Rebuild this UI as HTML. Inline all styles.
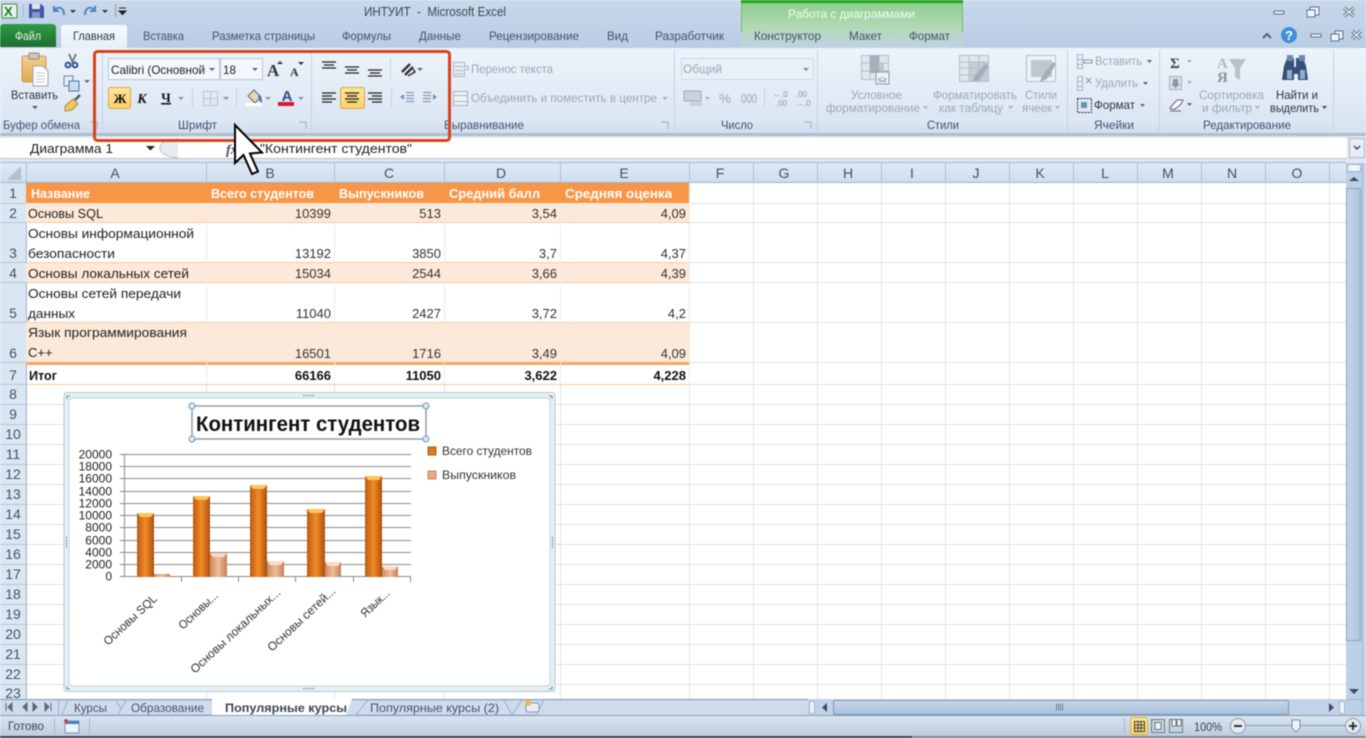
<!DOCTYPE html>
<html lang="ru"><head><meta charset="utf-8"><title>ИНТУИТ - Microsoft Excel</title>
<style>
html,body{margin:0;padding:0;width:1366px;height:738px;overflow:hidden;background:#fff}
svg{display:block;filter:blur(.4px)}
text{font-family:"Liberation Sans","Noto Sans CJK SC",sans-serif;white-space:pre}
.r{font-size:12px;fill:#44536a}
.k{font-size:12px;fill:#2c3440}
.d{font-size:12px;fill:#9aa8b8}
.c{font-size:13px;fill:#222}
.b{font-size:13px;fill:#111;font-weight:bold}
.w{font-size:13px;fill:#fff;font-weight:bold}
.h{font-size:14px;fill:#3f5268;text-anchor:middle}
.a{font-size:13px;fill:#333;text-anchor:end}
.x{font-size:12px;fill:#333}
</style></head><body>
<svg width="1366" height="738" viewBox="0 0 1366 738" xmlns="http://www.w3.org/2000/svg">
<defs>
<linearGradient id="top" x1="0" y1="0" x2="0" y2="1"><stop offset="0" stop-color="#c9d8ea"/><stop offset="1" stop-color="#b9cde4"/></linearGradient>
<linearGradient id="rib" x1="0" y1="0" x2="0" y2="1"><stop offset="0" stop-color="#edf3fa"/><stop offset=".7" stop-color="#dfe9f5"/><stop offset="1" stop-color="#d6e2f0"/></linearGradient>
<linearGradient id="grp" x1="0" y1="0" x2="0" y2="1"><stop offset="0" stop-color="#dfe9f5"/><stop offset="1" stop-color="#d0deee"/></linearGradient>
<linearGradient id="file" x1="0" y1="0" x2="0" y2="1"><stop offset="0" stop-color="#2f9b45"/><stop offset="1" stop-color="#1f6e30"/></linearGradient>
<linearGradient id="home" x1="0" y1="0" x2="0" y2="1"><stop offset="0" stop-color="#f6fafe"/><stop offset="1" stop-color="#e6eef8"/></linearGradient>
<linearGradient id="grn" x1="0" y1="0" x2="0" y2="1"><stop offset="0" stop-color="#89cd8a"/><stop offset=".55" stop-color="#b2d9b4"/><stop offset="1" stop-color="#bfd2e6"/></linearGradient>
<linearGradient id="yel" x1="0" y1="0" x2="0" y2="1"><stop offset="0" stop-color="#fde49a"/><stop offset="1" stop-color="#fbd268"/></linearGradient>
<linearGradient id="hdr" x1="0" y1="0" x2="0" y2="1"><stop offset="0" stop-color="#dfe9f5"/><stop offset="1" stop-color="#cfddee"/></linearGradient>
<linearGradient id="bar" x1="0" y1="0" x2="1" y2="0"><stop offset="0" stop-color="#b85c12"/><stop offset=".5" stop-color="#f48b28"/><stop offset="1" stop-color="#a9500e"/></linearGradient>
<linearGradient id="bar2" x1="0" y1="0" x2="1" y2="0"><stop offset="0" stop-color="#c98a64"/><stop offset=".5" stop-color="#f4bd98"/><stop offset="1" stop-color="#c27f58"/></linearGradient>
<linearGradient id="sb" x1="0" y1="0" x2="0" y2="1"><stop offset="0" stop-color="#c9d9ea"/><stop offset=".5" stop-color="#b6cbe2"/><stop offset="1" stop-color="#a8c0da"/></linearGradient>
<linearGradient id="sv" x1="0" y1="0" x2="1" y2="0"><stop offset="0" stop-color="#c3d4e8"/><stop offset="1" stop-color="#afc6df"/></linearGradient>
<linearGradient id="st" x1="0" y1="0" x2="0" y2="1"><stop offset="0" stop-color="#dae5f2"/><stop offset="1" stop-color="#bccde0"/></linearGradient>
<linearGradient id="clip" x1="0" y1="0" x2="0" y2="1"><stop offset="0" stop-color="#f3cf8a"/><stop offset="1" stop-color="#e0a850"/></linearGradient>
</defs>

<!-- top -->
<rect width="1366" height="48" fill="url(#top)"/>
<rect x="741" y="0" width="222" height="48" fill="url(#grn)"/>
<rect x="741" y="0" width="222" height="3" fill="#1ea51f"/>
<path d="M741.5 3V32M962.5 3V32" stroke="#6cbb6e" stroke-width="1"/>
<text x="364" y="16" font-size="13" fill="#3a4656" textLength="142" lengthAdjust="spacingAndGlyphs">ИНТУИТ  -  Microsoft Excel</text>
<text x="788" y="18" font-size="12" fill="#f4fbf4" textLength="127" lengthAdjust="spacingAndGlyphs">Работа с диаграммами</text>

<!-- QAT -->
<rect x="2" y="4" width="15" height="14" rx="1" fill="#e8f2e6" stroke="#3d8a48"/>
<text x="4" y="16" font-size="13" font-weight="bold" fill="#1b7a2c">X</text>
<path d="M23.5 4V17" stroke="#9fb2c8"/>
<path d="M29 4h12l3 3v11H29z" fill="#3f55a8"/><rect x="32" y="4" width="8" height="5" fill="#dfe6f4"/><rect x="32" y="12" width="8" height="6" fill="#8794c8"/>
<path d="M54 6v5h5M55 10c3-4 9-3 9 5" fill="none" stroke="#4a80c8" stroke-width="2"/>
<path d="M70 10h6l-3 3z" fill="#333"/>
<path d="M95 6v5h-5M94 10c-3-4-9-3-9 5" fill="none" stroke="#4a80c8" stroke-width="2"/>
<path d="M102 10h6l-3 3z" fill="#333"/>
<path d="M115.500 4V17" stroke="#8a9cb2"/>
<path d="M119 8h7M119 11h7l-3.500 3.500z" stroke="#222" fill="#222" stroke-width="1"/>

<!-- tabs -->
<path d="M0 47V28q0-4 4-4h48q4 0 4 4v19z" fill="url(#file)"/>
<path d="M61 48V28q0-3 3-3h60q3 0 3 3v20z" fill="url(#home)"/>
<text x="15" y="40" font-size="12" fill="#e8f5e8" textLength="26" lengthAdjust="spacingAndGlyphs">Файл</text>
<g class="tabs">
<text x="73" y="40" class="k" textLength="42" lengthAdjust="spacingAndGlyphs">Главная</text>
<text x="143" y="40" class="r" textLength="41" lengthAdjust="spacingAndGlyphs">Вставка</text>
<text x="212" y="40" class="r" textLength="103" lengthAdjust="spacingAndGlyphs">Разметка страницы</text>
<text x="342" y="40" class="r" textLength="49" lengthAdjust="spacingAndGlyphs">Формулы</text>
<text x="419" y="40" class="r" textLength="42" lengthAdjust="spacingAndGlyphs">Данные</text>
<text x="489" y="40" class="r" textLength="90" lengthAdjust="spacingAndGlyphs">Рецензирование</text>
<text x="607" y="40" class="r" textLength="21" lengthAdjust="spacingAndGlyphs">Вид</text>
<text x="655" y="40" class="r" textLength="69" lengthAdjust="spacingAndGlyphs">Разработчик</text>
<text x="754" y="40" class="r" textLength="67" lengthAdjust="spacingAndGlyphs">Конструктор</text>
<text x="849" y="40" class="r" textLength="33" lengthAdjust="spacingAndGlyphs">Макет</text>
<text x="909" y="40" class="r" textLength="41" lengthAdjust="spacingAndGlyphs">Формат</text>
</g>

<!-- window buttons -->
<g fill="#eef3fa" stroke="#5f7088" stroke-width="1">
<rect x="1274" y="11" width="10" height="3"/>
<rect x="1310" y="7" width="9" height="8"/><rect x="1307" y="10" width="8" height="7"/>
<rect x="1311" y="34" width="10" height="3"/>
<rect x="1335" y="31" width="8" height="8"/><rect x="1331" y="34" width="8" height="7"/>
</g>
<path d="M1344 8l10 8M1354 8l-10 8M1352 31l9 8M1361 31l-9 8" stroke="#5f7088" stroke-width="3.400" fill="none"/>
<path d="M1344 8l10 8M1354 8l-10 8M1352 31l9 8M1361 31l-9 8" stroke="#eef3fa" stroke-width="1.400" fill="none"/>
<path d="M1263 38l4-4 4 4" fill="none" stroke="#44546a" stroke-width="1.800"/>
<circle cx="1289" cy="35" r="8" fill="#3f8fd8"/>
<text x="1289" y="40" font-size="13" font-weight="bold" fill="#fff" text-anchor="middle">?</text>

<!-- ribbon -->
<rect y="48" width="1366" height="85" fill="url(#rib)"/>
<rect y="118" width="1333" height="15" fill="url(#grp)"/>
<rect y="133" width="1366" height="3" fill="#b0bdcc"/>
<path d="M102.500 50V132M311.500 52V132M674.500 50V132M817.500 50V132M1067.500 50V132M1159.500 50V132M1333.500 50V132" stroke="#c6d3e2"/>

<text x="3" y="129" class="r" textLength="77" lengthAdjust="spacingAndGlyphs">Буфер обмена</text>
<text x="178" y="129" class="r" textLength="39" lengthAdjust="spacingAndGlyphs">Шрифт</text>
<text x="444" y="129" class="r" textLength="80" lengthAdjust="spacingAndGlyphs">Выравнивание</text>
<text x="721" y="129" class="r" textLength="32" lengthAdjust="spacingAndGlyphs">Число</text>
<text x="927" y="129" class="r" textLength="32" lengthAdjust="spacingAndGlyphs">Стили</text>
<text x="1094" y="129" class="r" textLength="40" lengthAdjust="spacingAndGlyphs">Ячейки</text>
<text x="1203" y="129" class="r" textLength="88" lengthAdjust="spacingAndGlyphs">Редактирование</text>
<path d="M90 122h7v7M299 122h7v7M661 122h7v7M804 122h7v7" fill="none" stroke="#b4c0ce" stroke-width="1.500"/>

<!-- clipboard -->
<rect x="22" y="56" width="24" height="26" rx="2" fill="url(#clip)" stroke="#c79a58"/>
<rect x="29" y="53" width="10" height="6" rx="1" fill="#c9c9c0" stroke="#8d8d80"/>
<path d="M33 66h10l5 5v15H33z" fill="#fbfcfe" stroke="#a0a8b4"/>
<path d="M36 73h9M36 76h9M36 79h9M36 82h9" stroke="#c8ced8"/>
<text x="11" y="99" class="k" textLength="47" lengthAdjust="spacingAndGlyphs">Вставить</text>
<path d="M32 106h6l-3 3z" fill="#556"/>
<path d="M69 54l4 9M76 54l-4 9" stroke="#66728a" stroke-width="1.800"/><circle cx="68" cy="65" r="2.400" fill="none" stroke="#30509c" stroke-width="2"/><circle cx="75" cy="65" r="2.400" fill="none" stroke="#30509c" stroke-width="2"/>
<rect x="64" y="76" width="9" height="10" fill="#e4ecf6" stroke="#6c88ac"/><rect x="69" y="81" width="10" height="10" fill="#c9dcf2" stroke="#4e78ac"/>
<path d="M84 80h6l-3 3z" fill="#667"/>
<path d="M65 106l8-7 5 5-6 6-7 1z" fill="#eec95a" stroke="#a88a40"/><path d="M75 100l5-5" stroke="#556" stroke-width="2.500"/>

<!-- font group -->
<rect x="108.500" y="58.500" width="111" height="21" fill="#f4f8fc" stroke="#b8c6d6"/>
<rect x="220.500" y="58.500" width="42" height="21" fill="#f4f8fc" stroke="#b8c6d6"/>
<text x="111" y="74" font-size="12" fill="#222" textLength="94" lengthAdjust="spacingAndGlyphs">Calibri (Основной</text>
<text x="223" y="74" font-size="12" fill="#222" textLength="13" lengthAdjust="spacingAndGlyphs">18</text>
<path d="M209 68h6l-3 3zM252 68h6l-3 3z" fill="#667"/>
<text x="267" y="76" font-size="17" font-weight="bold" fill="#333" style="font-family:'Liberation Serif',serif">A</text>
<text x="290" y="76" font-size="12" font-weight="bold" fill="#333" style="font-family:'Liberation Serif',serif">A</text>
<path d="M277 64l3-3 3 3zM298 62l3 3 3-3z" fill="#333"/>
<rect x="108.500" y="87.500" width="22" height="21" rx="2" fill="url(#yel)" stroke="#d4a850"/>
<text x="120" y="103" font-size="13" font-weight="bold" fill="#111" text-anchor="middle" style="font-family:'Liberation Serif',serif">Ж</text>
<text x="142" y="103" font-size="14" font-weight="bold" font-style="italic" fill="#111" text-anchor="middle" style="font-family:'Liberation Serif',serif">К</text>
<text x="166" y="102" font-size="13" font-weight="bold" fill="#111" text-anchor="middle" style="font-family:'Liberation Serif',serif">Ч</text>
<rect x="161" y="103" width="10" height="1.500" fill="#111"/>
<path d="M178 97h6l-3 3zM223 97h6l-3 3zM265 97h6l-3 3zM298 97h6l-3 3z" fill="#8a96a6"/>
<path d="M192.500 88V108M236.500 88V108" stroke="#c6d3e2"/>
<path d="M203.500 91.500h14v14h-14zM210.500 91.500v14M203.500 98.500h14" fill="none" stroke="#bcc6d2"/>
<path d="M248 96l6-6 7 7-6 6z" fill="#e8d6b0" stroke="#667"/><path d="M258 95q5 3 4 8-4-2-4-8z" fill="#3f78c4"/>
<rect x="245" y="103" width="17" height="3" fill="#fff"/>
<text x="287" y="101" font-size="15" font-weight="bold" fill="#2f4a80" text-anchor="middle">A</text>
<rect x="278" y="102" width="16" height="4" fill="#d8182c"/>

<!-- align -->
<path d="M322 62h14M324 65h10M322 68h14M345 67h14M347 70h10M345 73h14M368 70h14M370 73h10M368 76h14" stroke="#222" stroke-width="1.300" fill="none"/>
<path d="M390.500 58V80" stroke="#c6d3e2"/>
<path d="M402 72l8-8M405 75l8-8" stroke="#333" stroke-width="2.400"/><path d="M408 76l7-4-2-3" fill="none" stroke="#333" stroke-width="1.500"/>
<path d="M417 68h6l-3 3z" fill="#667"/>
<rect x="340.500" y="87.500" width="24" height="21" rx="2" fill="url(#yel)" stroke="#d4a850"/>
<path d="M322 93h14M322 96h10M322 99h14M322 102h10M345 93h14M347 96h10M345 99h14M347 102h10M368 93h14M372 96h10M368 99h14M372 102h10" stroke="#222" stroke-width="1.300" fill="none"/>
<path d="M391.500 88V108" stroke="#c6d3e2"/>
<path d="M406 92.500h8M406 95.500h8M406 98.500h8M406 101.500h8M423 92.500h8M423 95.500h8M423 98.500h8M423 101.500h8" stroke="#7a8a9c" fill="none"/>
<path d="M404 94l-4 3 4 3zM433 94l4 3-4 3z" fill="#6a94c4"/>

<!-- wrap/merge -->
<path d="M453.500 62.500h11v14h-11zM455 66.500h8M455 70.500h8M455 74h8" fill="none" stroke="#a8b2be"/>
<path d="M465 66h3v4h-2" fill="none" stroke="#a8b2be"/>
<text x="471" y="73" class="d" textLength="82" lengthAdjust="spacingAndGlyphs">Перенос текста</text>
<path d="M453.500 91.500h14v14h-14zM453.500 95.500h14M453.500 101.500h14" fill="#eef2f6" stroke="#a8b2be"/>
<text x="471" y="102" class="d" textLength="186" lengthAdjust="spacingAndGlyphs">Объединить и поместить в центре</text>
<path d="M662 97h6l-3 3z" fill="#a8b2be"/>

<!-- number -->
<rect x="681.500" y="58.500" width="132" height="21" fill="#e8f0f8" stroke="#ccd8e6"/>
<text x="683" y="73" class="d" textLength="39" lengthAdjust="spacingAndGlyphs">Общий</text>
<path d="M803 68h6l-3 3z" fill="#7a8898"/>
<rect x="684" y="91" width="17" height="10" fill="#c8d2dc" stroke="#a0acba"/><path d="M690 102h12v4h-12z" fill="#c8d2dc"/>
<path d="M705 97h5l-2.500 3z" fill="#a8b2be"/>
<text x="719" y="103" class="d" textLength="12" lengthAdjust="spacingAndGlyphs" style="font-size:13px">%</text>
<text x="741" y="103" class="d" textLength="16" lengthAdjust="spacingAndGlyphs" style="font-size:13px">000</text>
<path d="M764.500 88V108" stroke="#c6d3e2"/>
<text x="773" y="97" font-size="8" fill="#8a98a8">←,0</text><text x="776" y="106" font-size="8" fill="#8a98a8">,00</text>
<text x="796" y="97" font-size="8" fill="#8a98a8">,00</text><text x="796" y="106" font-size="8" fill="#8a98a8">→,0</text>

<!-- styles -->
<g fill="none" stroke="#b4bec9">
<rect x="861.500" y="55.500" width="27" height="24" fill="#dfe6ee"/>
<path d="M861 63h28M861 71h28M870 55v24M879 55v24"/>
</g>
<rect x="870" y="55" width="9" height="18" fill="#a5afbb"/>
<rect x="879" y="63" width="5" height="10" fill="#bcc5cf"/>
<rect x="876" y="72" width="13" height="12" fill="#eef2f6" stroke="#8d98a6"/>
<text x="878" y="82" font-size="8" fill="#6d7886">≤≥</text>

<g fill="none" stroke="#b4bec9">
<rect x="959.500" y="55.500" width="29" height="26" fill="#dfe6ee"/>
<path d="M959 62h30M959 68h30M959 75h30M969 55v27M979 55v27"/>
</g>
<rect x="969" y="62" width="20" height="20" fill="#b6bfca" opacity=".7"/>
<path d="M989 66l-10 14-6 2 1-5 11-13z" fill="#a4aeb9"/>
<rect x="1026.500" y="55.500" width="29" height="26" fill="#eef2f6" stroke="#b4bec9"/>
<rect x="1031" y="60" width="21" height="17" fill="#bfc8d2"/>
<path d="M1056 64l-9 15-7 3 2-6 11-14z" fill="#a4aeb9"/>
<text x="851" y="99" class="d" textLength="51" lengthAdjust="spacingAndGlyphs">Условное</text>
<text x="826" y="112" class="d" textLength="94" lengthAdjust="spacingAndGlyphs">форматирование</text>
<text x="933" y="99" class="d" textLength="84" lengthAdjust="spacingAndGlyphs">Форматировать</text>
<text x="939" y="112" class="d" textLength="64" lengthAdjust="spacingAndGlyphs">как таблицу</text>
<text x="1025" y="99" class="d" textLength="32" lengthAdjust="spacingAndGlyphs">Стили</text>
<text x="1022" y="112" class="d" textLength="30" lengthAdjust="spacingAndGlyphs">ячеек</text>
<path d="M923 106h5l-2.500 3zM1008 106h5l-2.500 3zM1055 106h5l-2.500 3z" fill="#a8b2be"/>

<!-- cells -->
<path d="M1077.500 54.500h5v14h-5zM1077.500 59.500h5M1077.500 64.500h5M1077.500 76.500h5v14h-5zM1077.500 81.500h5M1077.500 86.500h5" fill="none" stroke="#a8b2be"/>
<path d="M1084 60h8v3h-8zM1086 78l5 5M1091 78l-5 5" fill="none" stroke="#8a96a6"/>
<text x="1095" y="65" class="d" textLength="47" lengthAdjust="spacingAndGlyphs">Вставить</text>
<text x="1095" y="87" class="d" textLength="43" lengthAdjust="spacingAndGlyphs">Удалить</text>
<rect x="1077.500" y="98.500" width="14" height="14" fill="#dfe8f2" stroke="#333" stroke-dasharray="2 1"/>
<rect x="1081" y="102" width="6" height="6" fill="#6d8fb8"/>
<text x="1094" y="109" class="k" textLength="41" lengthAdjust="spacingAndGlyphs">Формат</text>
<path d="M1147 60h5l-2.500 3zM1143 82h5l-2.500 3zM1140 104h5l-2.500 3z" fill="#667"/>

<!-- edit -->
<text x="1170" y="68" font-size="15" font-weight="bold" fill="#445" style="font-family:'Liberation Serif',serif">Σ</text>
<path d="M1187 60h5l-2.500 3z" fill="#a8b2be"/>
<rect x="1169.500" y="76.500" width="12" height="13" fill="#d8e0e8" stroke="#a8b2be"/><path d="M1173 79h5v5h2l-4.500 4-4.500-4h2z" fill="#8a96a6"/>
<path d="M1187 81h5l-2.500 3z" fill="#a8b2be"/>
<path d="M1170 108l7-8h6l-2 4-6 5h-4z" fill="#fbfcfe" stroke="#667"/><path d="M1170 111h11" stroke="#667"/>
<path d="M1187 103h5l-2.500 3z" fill="#667"/>
<text x="1217" y="68" font-size="15" font-weight="bold" fill="#b0b8c2" style="font-family:'Liberation Serif',serif">А</text>
<text x="1217" y="82" font-size="15" font-weight="bold" fill="#8a94a0" style="font-family:'Liberation Serif',serif">Я</text>
<path d="M1229 59h17l-6 9v12l-5-3v-9z" fill="#b8c0ca"/>
<text x="1199" y="99" class="d" textLength="65" lengthAdjust="spacingAndGlyphs">Сортировка</text>
<text x="1202" y="112" class="d" textLength="50" lengthAdjust="spacingAndGlyphs">и фильтр</text>
<path d="M1255 106h5l-2.500 3z" fill="#a8b2be"/>
<path d="M1284 66l3-8h7v9h2v-9h7l3 8 2 14h-10v-6h-4v6h-12z" fill="#34507a"/>
<rect x="1287" y="55" width="6" height="6" fill="#6d8aae"/><rect x="1299" y="55" width="6" height="6" fill="#6d8aae"/>
<path d="M1287 70h5v9h-5zM1300 70h5v9h-5z" fill="#95abc8"/>
<text x="1276" y="99" class="k" textLength="42" lengthAdjust="spacingAndGlyphs">Найти и</text>
<text x="1270" y="112" class="k" textLength="49" lengthAdjust="spacingAndGlyphs">выделить</text>
<path d="M1322 106h5l-2.500 3z" fill="#445"/>

<!-- formula bar -->
<rect y="136" width="1366" height="27" fill="#dfe8f2"/>
<rect y="138" width="1347" height="20" fill="#fff"/>
<path d="M0 158.500H1347" stroke="#b4c2d2"/>
<rect x="1349.500" y="138.500" width="15" height="19" fill="#e6edf6" stroke="#a8b8ca"/>
<path d="M1354 146l3 3 3-3" fill="none" stroke="#445" stroke-width="1.500"/>
<text x="30" y="153" font-size="13" fill="#222" textLength="83" lengthAdjust="spacingAndGlyphs">Диаграмма 1</text>
<path d="M146 146h9l-4.500 4.500z" fill="#222"/>
<path d="M178 139q-18 1-18 9t18 10h-0" fill="#e8ecf1" stroke="#b6c0cc"/>
<text x="226" y="154" font-size="14" font-style="italic" font-weight="bold" fill="#44536a" style="font-family:'Liberation Serif',serif">fx</text>
<text x="260" y="153" font-size="13" fill="#222" textLength="152" lengthAdjust="spacingAndGlyphs">"Контингент студентов"</text>

<!-- grid -->
<rect x="0" y="183" width="1346" height="516" fill="#fff"/>
<path d="M206.500 183V699M334.500 183V699M444.500 183V699M560.500 183V699M689.500 183V699M753.500 183V699M817.500 183V699M881.500 183V699M945.500 183V699M1009.500 183V699M1073.500 183V699M1137.500 183V699M1201.500 183V699M1265.500 183V699M1329.500 183V699" stroke="#dfe3e7"/>
<path d="M26 203.500H1346M26 222.500H1346M26 262.500H1346M26 282.500H1346M26 322.500H1346M26 362.500H1346M26 384.500H1346M26 404.500H1346M26 424.500H1346M26 444.500H1346M26 464.500H1346M26 484.500H1346M26 504.500H1346M26 524.500H1346M26 544.500H1346M26 564.500H1346M26 584.500H1346M26 604.500H1346M26 624.500H1346M26 644.500H1346M26 664.500H1346M26 684.500H1346" stroke="#dfe3e7"/>

<!-- headers -->
<rect x="0" y="163" width="1346" height="20" fill="url(#hdr)"/>
<path d="M0 162.500H1346" stroke="#9fb3c8"/>
<rect x="0" y="183" width="26" height="516" fill="#dbe6f3"/>
<path d="M26.500 183V699M0 182.500H1346" stroke="#9fb3c8"/>
<path d="M26.500 163V183M206.500 163V183M334.500 163V183M444.500 163V183M560.500 163V183M689.500 163V183M753.500 163V183M817.500 163V183M881.500 163V183M945.500 163V183M1009.500 163V183M1073.500 163V183M1137.500 163V183M1201.500 163V183M1265.500 163V183M1329.500 163V183" stroke="#aebfd2"/>
<path d="M0 203.500H26M0 222.500H26M0 262.500H26M0 282.500H26M0 322.500H26M0 362.500H26M0 384.500H26M0 404.500H26M0 424.500H26M0 444.500H26M0 464.500H26M0 484.500H26M0 504.500H26M0 524.500H26M0 544.500H26M0 564.500H26M0 584.500H26M0 604.500H26M0 624.500H26M0 644.500H26M0 664.500H26M0 684.500H26" stroke="#b6c6d8"/>
<path d="M21 166v14H7z" fill="#b0bfd0"/>
<text x="115" y="178" class="h">A</text><text x="270" y="178" class="h">B</text><text x="389" y="178" class="h">C</text><text x="501" y="178" class="h">D</text><text x="624" y="178" class="h">E</text><text x="720" y="178" class="h">F</text><text x="784" y="178" class="h">G</text><text x="848" y="178" class="h">H</text><text x="912" y="178" class="h">I</text><text x="976" y="178" class="h">J</text><text x="1040" y="178" class="h">K</text><text x="1105" y="178" class="h">L</text><text x="1168" y="178" class="h">M</text><text x="1232" y="178" class="h">N</text><text x="1297" y="178" class="h">O</text>
<text x="13" y="198" class="h">1</text><text x="13" y="218" class="h">2</text><text x="13" y="258" class="h">3</text><text x="13" y="278" class="h">4</text><text x="13" y="318" class="h">5</text><text x="13" y="358" class="h">6</text><text x="13" y="380" class="h">7</text><text x="13" y="399" class="h">8</text><text x="13" y="419" class="h">9</text><text x="13" y="439" class="h">10</text><text x="13" y="459" class="h">11</text><text x="13" y="479" class="h">12</text><text x="13" y="499" class="h">13</text><text x="13" y="519" class="h">14</text><text x="13" y="539" class="h">15</text><text x="13" y="559" class="h">16</text><text x="13" y="579" class="h">17</text><text x="13" y="599" class="h">18</text><text x="13" y="619" class="h">19</text><text x="13" y="639" class="h">20</text><text x="13" y="659" class="h">21</text><text x="13" y="679" class="h">22</text><text x="13" y="698" class="h">23</text>

<!-- table -->
<rect x="26" y="183" width="663" height="20" fill="#f79646"/>
<rect x="26" y="203" width="663" height="19" fill="#fde9d9"/>
<rect x="26" y="262" width="663" height="20" fill="#fde9d9"/>
<rect x="26" y="322" width="663" height="40" fill="#fde9d9"/>
<path d="M26 222.500H689M26 262.500H689M26 282.500H689M26 322.500H689M26 384.500H689" stroke="#fbc9a0"/>
<rect x="26" y="362" width="663" height="3" fill="#f5a565"/>
<path d="M206.500 203V384M334.500 203V384M444.500 203V384M560.500 203V384M689.500 183V384" stroke="#f2ebe4"/>
<text x="31" y="198" class="w" textLength="59" lengthAdjust="spacingAndGlyphs">Название</text>
<text x="211" y="198" class="w" textLength="103" lengthAdjust="spacingAndGlyphs">Всего студентов</text>
<text x="339" y="198" class="w" textLength="85" lengthAdjust="spacingAndGlyphs">Выпускников</text>
<text x="449" y="198" class="w" textLength="91" lengthAdjust="spacingAndGlyphs">Средний балл</text>
<text x="565" y="198" class="w" textLength="107" lengthAdjust="spacingAndGlyphs">Средняя оценка</text>
<text x="28" y="218" class="c" textLength="75" lengthAdjust="spacingAndGlyphs">Основы SQL</text>
<text x="28" y="238" class="c" textLength="166" lengthAdjust="spacingAndGlyphs">Основы информационной</text>
<text x="28" y="258" class="c" textLength="87" lengthAdjust="spacingAndGlyphs">безопасности</text>
<text x="28" y="278" class="c" textLength="161" lengthAdjust="spacingAndGlyphs">Основы локальных сетей</text>
<text x="28" y="298" class="c" textLength="153" lengthAdjust="spacingAndGlyphs">Основы сетей передачи</text>
<text x="28" y="318" class="c" textLength="47" lengthAdjust="spacingAndGlyphs">данных</text>
<text x="28" y="337" class="c" textLength="159" lengthAdjust="spacingAndGlyphs">Язык программирования</text>
<text x="28" y="357" class="c">C++</text>
<text x="29" y="380" class="b" textLength="28" lengthAdjust="spacingAndGlyphs">Итог</text>

<g>
<text x="331" y="218" class="a">10399</text><text x="441" y="218" class="a">513</text><text x="557" y="218" class="a">3,54</text><text x="686" y="218" class="a">4,09</text>
<text x="331" y="258" class="a">13192</text><text x="441" y="258" class="a">3850</text><text x="557" y="258" class="a">3,7</text><text x="686" y="258" class="a">4,37</text>
<text x="331" y="278" class="a">15034</text><text x="441" y="278" class="a">2544</text><text x="557" y="278" class="a">3,66</text><text x="686" y="278" class="a">4,39</text>
<text x="331" y="318" class="a">11040</text><text x="441" y="318" class="a">2427</text><text x="557" y="318" class="a">3,72</text><text x="686" y="318" class="a">4,2</text>
<text x="331" y="358" class="a">16501</text><text x="441" y="358" class="a">1716</text><text x="557" y="358" class="a">3,49</text><text x="686" y="358" class="a">4,09</text>
<text x="331" y="380" class="a" style="font-weight:bold;fill:#111">66166</text><text x="441" y="380" class="a" style="font-weight:bold;fill:#111">11050</text><text x="557" y="380" class="a" style="font-weight:bold;fill:#111">3,622</text><text x="686" y="380" class="a" style="font-weight:bold;fill:#111">4,228</text>
</g>

<!-- chart -->
<rect x="64" y="392.500" width="491" height="299" rx="3" fill="#e6f0f3" stroke="#b2c8d1"/>
<rect x="69" y="398" width="481" height="288" rx="4" fill="#fff" stroke="#bcd6de"/>
<path d="M303 395.500h2M306 395.500h2M309 395.500h2M312 395.500h2M303 688.500h2M306 688.500h2M309 688.500h2M312 688.500h2M66.500 537v2M66.500 540v2M66.500 543v2M66.500 546v2M552.500 537v2M552.500 540v2M552.500 543v2M552.500 546v2" stroke="#6d8592"/>
<path d="M67 396h3M67 396v3M552 396h-3M552 396v3M67 689h3M67 689v-3M552 689h-3M552 689v-3" stroke="#6d8592" fill="none"/>
<rect x="192" y="406" width="234" height="33" fill="#fff" stroke="#989ea4" stroke-width="1.500"/>
<g fill="#dce9f2" stroke="#6c9ab8"><circle cx="192" cy="406" r="3"/><circle cx="426" cy="406" r="3"/><circle cx="192" cy="439" r="3"/><circle cx="426" cy="439" r="3"/></g>
<text x="196" y="431" font-size="21" font-weight="bold" fill="#111" textLength="224" lengthAdjust="spacingAndGlyphs">Контингент студентов</text>

<path d="M124 454.500H411M124 466.500H411M124 478.500H411M124 491.500H411M124 503.500H411M124 515.500H411M124 527.500H411M124 540.500H411M124 552.500H411M124 564.500H411" stroke="#8a8a8a"/>
<path d="M124.500 454V577M120 454.500h4M120 466.500h4M120 478.500h4M120 491.500h4M120 503.500h4M120 515.500h4M120 527.500h4M120 540.500h4M120 552.500h4M120 564.500h4M120 576.500h4M124 576.500H411M181.500 577v5M238.500 577v5M295.500 577v5M353.500 577v5M410.500 577v5" stroke="#8a8a8a" fill="none"/>
<g font-size="12" fill="#222" text-anchor="end">
<text x="112" y="458.500">20000</text><text x="112" y="470.500">18000</text><text x="112" y="482.500">16000</text><text x="112" y="495.500">14000</text><text x="112" y="507.500">12000</text><text x="112" y="519.500">10000</text><text x="112" y="531.500">8000</text><text x="112" y="544.500">6000</text><text x="112" y="556.500">4000</text><text x="112" y="568.500">2000</text><text x="112" y="580.500">0</text>
</g>
<g fill="url(#bar)">
<rect x="137" y="513" width="17" height="64"/><rect x="193" y="496" width="17" height="81"/><rect x="250" y="485" width="17" height="92"/><rect x="307" y="509" width="18" height="68"/><rect x="365" y="476" width="17" height="101"/>
</g>
<g fill="url(#bar2)">
<rect x="154" y="574" width="16" height="3"/><rect x="210" y="553" width="17" height="24"/><rect x="267" y="561" width="17" height="16"/><rect x="325" y="562" width="16" height="15"/><rect x="382" y="566" width="16" height="11"/>
</g>
<g fill="#ffc25e">
<path d="M137 513h17l-3 4h-11zM193 496h17l-3 4h-11zM250 485h17l-3 4h-11zM307 509h18l-3 4h-12zM365 476h17l-3 4h-11z"/>
</g>
<g fill="#f9dcc6">
<path d="M210 553h17l-3 4h-11zM267 561h17l-3 4h-11zM325 562h16l-3 4h-10zM382 566h16l-3 4h-10z"/>
</g>
<g font-size="12" fill="#333">
<text transform="translate(108 646) rotate(-43)" textLength="68" lengthAdjust="spacingAndGlyphs">Основы SQL</text>
<text transform="translate(183 630) rotate(-43)" textLength="49" lengthAdjust="spacingAndGlyphs">Основы...</text>
<text transform="translate(195 674) rotate(-43)" textLength="118" lengthAdjust="spacingAndGlyphs">Основы локальных...</text>
<text transform="translate(272 652) rotate(-43)" textLength="88" lengthAdjust="spacingAndGlyphs">Основы сетей...</text>
<text transform="translate(365 618) rotate(-43)" textLength="35" lengthAdjust="spacingAndGlyphs">Язык...</text>
</g>
<rect x="428" y="447" width="8" height="8" fill="#d87a1c" stroke="#a9601c"/>
<rect x="428" y="471" width="8" height="8" fill="#e8a882" stroke="#c28a68"/>
<text x="442" y="455" font-size="12" fill="#333" textLength="90" lengthAdjust="spacingAndGlyphs">Всего студентов</text>
<text x="442" y="479" font-size="12" fill="#333" textLength="74" lengthAdjust="spacingAndGlyphs">Выпускников</text>

<!-- vertical scrollbar -->
<rect x="1346" y="163" width="20" height="552" fill="#c3d4e8"/>
<rect x="1346" y="163" width="16" height="552" fill="#bed0e6"/>
<rect x="1347.500" y="164.500" width="13" height="7" fill="#eef3fa" stroke="#9fb3c8"/>
<path d="M1349 181h10l-5-4z" fill="#3c4c62"/>
<rect x="1346.500" y="188.500" width="14" height="452" fill="url(#sv)" stroke="#8ea4bc"/>
<path d="M1349 689h10l-5 5z" fill="#3c4c62"/>
<path d="M1346 699.500H1362" stroke="#9fb3c8"/>
<path d="M1362.500 163V715" stroke="#9fb3c8"/>

<!-- bottom bar -->
<rect x="0" y="699" width="1346" height="16" fill="#cddbec"/>
<path d="M0 699.500H1346" stroke="#7f95ae"/>
<path d="M58.500 700V715" stroke="#9fb3c8"/>
<path d="M6 703v8M12 703l-4 4 4 4zM27 703l-4 4 4 4zM33 703l4 4-4 4zM45 703l4 4-4 4zM51 703v8" fill="#5a6a80" stroke="#5a6a80"/>
<path d="M62 715l6-15h48l8 15z" fill="#cfdcee" stroke="#9fb3c8"/>
<path d="M118 715l8-15h86l6 15z" fill="#cfdcee" stroke="#9fb3c8"/>
<path d="M356 715l12-15h136l8 15z" fill="#cfdcee" stroke="#9fb3c8"/>
<path d="M512 715l10-15h22l-8 15z" fill="#cfdcee" stroke="#9fb3c8"/>
<path d="M212 715V699H352l-6 16z" fill="#fff"/>
<text x="74" y="712" font-size="12" fill="#44536a" textLength="33" lengthAdjust="spacingAndGlyphs">Курсы</text>
<text x="131" y="712" font-size="12" fill="#44536a" textLength="73" lengthAdjust="spacingAndGlyphs">Образование</text>
<text x="225" y="712" font-size="12" font-weight="bold" fill="#3a4656" textLength="122" lengthAdjust="spacingAndGlyphs">Популярные курсы</text>
<text x="370" y="712" font-size="12" fill="#44536a" textLength="129" lengthAdjust="spacingAndGlyphs">Популярные курсы (2)</text>
<rect x="526" y="703" width="13" height="9" rx="2" fill="#e8eef6" stroke="#7f95ae"/><circle cx="528" cy="703" r="3" fill="#f0b840"/>
<rect x="808" y="699" width="538" height="16" fill="#c2d3e7"/>
<rect x="809.500" y="701.500" width="5" height="12" fill="#eef3fa" stroke="#9fb3c8"/>
<path d="M827 703l-5 4.500 5 4.500z" fill="#3c4c62"/>
<rect x="833.500" y="700.500" width="455" height="14" rx="1" fill="url(#sb)" stroke="#7f95ae"/>
<path d="M1056.500 703.500v7M1058.500 703.500v7M1060.500 703.500v7M1062.500 703.500v7" stroke="#6d7f96"/>
<path d="M1329 703l5 4.500-5 4.500z" fill="#3c4c62"/>
<rect x="1339.500" y="701.500" width="5" height="12" fill="#eef3fa" stroke="#9fb3c8"/>

<!-- status bar -->
<rect y="715" width="1366" height="21" fill="url(#st)"/>
<rect y="736" width="1366" height="2" fill="#39444f"/>
<rect x="912" y="736" width="454" height="2" fill="#7c8896"/>
<path d="M0 715.500H1366" stroke="#8a9eb6"/>
<text x="8" y="730" font-size="12" fill="#3a4656" textLength="36" lengthAdjust="spacingAndGlyphs">Готово</text>
<path d="M54.500 718V734M89.500 718V734M1124.500 718V734" stroke="#a8b8ca"/>
<rect x="65" y="721" width="14" height="12" fill="#eef3fa" stroke="#7f95ae"/><rect x="65" y="721" width="14" height="3" fill="#4a80c8"/><circle cx="66" cy="721" r="2" fill="#d84040"/>
<rect x="1130.500" y="717.500" width="17" height="17" rx="2" fill="url(#yel)" stroke="#e0b048"/>
<path d="M1134.500 721.500h10v10h-10zM1134.500 725h10M1134.500 728h10M1138 721.500v10M1141 721.500v10" fill="none" stroke="#444"/>
<rect x="1151.500" y="719.500" width="13" height="13" fill="#c8d3df" stroke="#6d7886"/><rect x="1155" y="722.500" width="6" height="7" fill="#eef2f6" stroke="#6d7886"/>
<rect x="1169.500" y="719.500" width="13" height="13" fill="#c8d3df" stroke="#6d7886"/><path d="M1172 720v6h4v-6M1177 720v6h4v-6" fill="#eef2f6" stroke="#6d7886"/>
<text x="1194" y="731" font-size="12" fill="#3a4656" textLength="28" lengthAdjust="spacingAndGlyphs">100%</text>
<circle cx="1238" cy="726" r="7.500" fill="#e4ebf3" stroke="#8a9cb0"/><path d="M1234 726h8" stroke="#333" stroke-width="2"/>
<path d="M1245 725.500H1346" stroke="#8a9cb0"/>
<path d="M1292 720h8v8l-4 4-4-4z" fill="#eef3fa" stroke="#7f8ea2"/>
<circle cx="1353" cy="726" r="7.500" fill="#e4ebf3" stroke="#8a9cb0"/><path d="M1349 726h8M1353 722v8" stroke="#333" stroke-width="2"/>

<!-- red frame -->
<rect x="94.500" y="51.500" width="355" height="89" rx="3" fill="none" stroke="#d8431f" stroke-width="3"/>

<!-- cursor -->
<path d="M235 125V163L243.500 155L252 174L258 171.500L250 153.500L262 152.500Z" fill="#fff" stroke="#000" stroke-width="2" stroke-linejoin="miter"/>
</svg>
</body></html>
